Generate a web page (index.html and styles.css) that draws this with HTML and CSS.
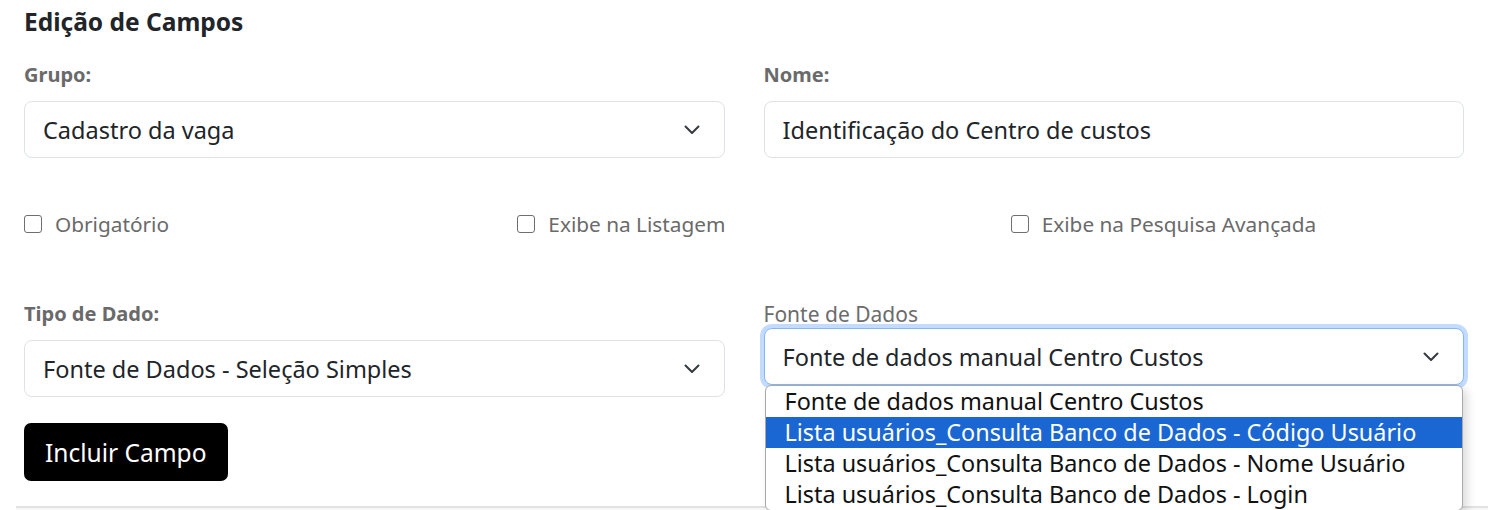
FILE: index.html
```html
<!DOCTYPE html>
<html lang="pt-BR">
<head>
<meta charset="utf-8">
<title>Edição de Campos</title>
<link rel="stylesheet" href="styles.css">
</head>
<body>
<div class="page">
  <h1 class="title">Edição de Campos</h1>

  <div class="row two">
    <div class="field">
      <label class="label">Grupo:</label>
      <div class="control select">
        <span>Cadastro da vaga</span>
        <svg class="chev" width="16" height="10" viewBox="0 0 16 10"><path d="M1.5 1.5 L8 8 L14.5 1.5" fill="none" stroke="#343a40" stroke-width="2" stroke-linecap="round" stroke-linejoin="round"/></svg>
      </div>
    </div>
    <div class="field">
      <label class="label">Nome:</label>
      <div class="control"><span>Identificação do Centro de custos</span></div>
    </div>
  </div>

  <div class="row three checks">
    <label class="check"><span class="box"></span>Obrigatório</label>
    <label class="check"><span class="box"></span>Exibe na Listagem</label>
    <label class="check"><span class="box"></span>Exibe na Pesquisa Avançada</label>
  </div>

  <div class="row two lower">
    <div class="field">
      <label class="label">Tipo de Dado:</label>
      <div class="control select">
        <span>Fonte de Dados - Seleção Simples</span>
        <svg class="chev" width="16" height="10" viewBox="0 0 16 10"><path d="M1.5 1.5 L8 8 L14.5 1.5" fill="none" stroke="#343a40" stroke-width="2" stroke-linecap="round" stroke-linejoin="round"/></svg>
      </div>
      <button class="btn">Incluir Campo</button>
    </div>
    <div class="field">
      <label class="label plain">Fonte de Dados</label>
      <div class="dd-wrap">
        <div class="control select focused">
          <span>Fonte de dados manual Centro Custos</span>
          <svg class="chev" width="16" height="10" viewBox="0 0 16 10"><path d="M1.5 1.5 L8 8 L14.5 1.5" fill="none" stroke="#343a40" stroke-width="2" stroke-linecap="round" stroke-linejoin="round"/></svg>
        </div>
        <ul class="dropdown">
          <li>Fonte de dados manual Centro Custos</li>
          <li class="active">Lista usuários_Consulta Banco de Dados - Código Usuário</li>
          <li>Lista usuários_Consulta Banco de Dados - Nome Usuário</li>
          <li>Lista usuários_Consulta Banco de Dados - Login</li>
        </ul>
      </div>
    </div>
  </div>

  <div class="table-top"></div>
</div>
</body>
</html>
```

FILE: styles.css
```css
* { box-sizing: border-box; }
html, body { margin: 0; padding: 0; background: #fff; }
body {
  font-family: "Noto Sans", "Open Sans", sans-serif;
  color: #212529;
  overflow: hidden;
  height: 510px;
}
.page { padding: 0 24px; }
.title {
  margin: 0;
  font-size: 24.5px;
  font-weight: 700;
  line-height: 44px;
  color: #212529;
}
.row { display: grid; column-gap: 39px; }
.row.two { grid-template-columns: 1fr 1fr; margin-top: 19px; }
.row.three { grid-template-columns: repeat(3, 1fr); column-gap: 40px; }
.field { display: flex; flex-direction: column; }
.label {
  font-size: 20px;
  font-weight: 700;
  color: #6a6a6a;
  line-height: 24px;
  margin-bottom: 14px;
}
.label.plain { font-weight: 400; font-size: 21px; margin-bottom: 2px; color: #6c6c6c; }
.control {
  height: 57px;
  border: 1px solid #dee2e6;
  border-radius: 8px;
  display: flex;
  align-items: center;
  justify-content: space-between;
  padding: 0 24px 0 18px;
  font-size: 23.5px;
  color: #212529;
  background: #fff;
  white-space: nowrap;
}
.chev { flex: none; }
.control.focused {
  border-color: #86b7fe;
  box-shadow: 0 0 0 4px rgba(13, 110, 253, 0.25);
}
.checks { margin-top: 54px; height: 24px; align-items: center; }
.check {
  display: flex;
  align-items: center;
  font-size: 20.8px;
  line-height: 24px;
  color: #6a6a6a;
}
.box {
  width: 18px; height: 18px;
  border: 1.5px solid #6f6f6f;
  border-radius: 3px;
  margin-right: 13px;
  background: #fff;
}
.row.two.lower { margin-top: 66px; }
.btn {
  align-self: flex-start;
  margin-top: 26px;
  height: 58px;
  padding: 0 21px;
  background: #000;
  color: #fff;
  border: none;
  border-radius: 7px;
  font-family: inherit;
  font-size: 24.5px;
}
.dd-wrap { position: relative; }
.dropdown {
  position: absolute;
  left: 1px; right: 1px; top: 57px;
  margin: 0; padding: 0;
  list-style: none;
  background: #fff;
  border: 1px solid #a9a9a9;
  border-radius: 6px;
  box-shadow: 4px 4px 10px rgba(0,0,0,0.15);
  font-size: 23.4px;
  z-index: 5;
  overflow: hidden;
}
.dropdown li {
  height: 31px;
  line-height: 31px;
  padding-left: 19px;
  color: #111;
  white-space: nowrap;
}
.dropdown li.active { background: #1a66d2; color: #fff; }
.table-top {
  margin-top: 25px;
  margin-left: -8px;
  margin-right: -40px;
  height: 20px;
  border-top: 2px solid #e2e2e2;
  background: #f7f7f7;
}
```
